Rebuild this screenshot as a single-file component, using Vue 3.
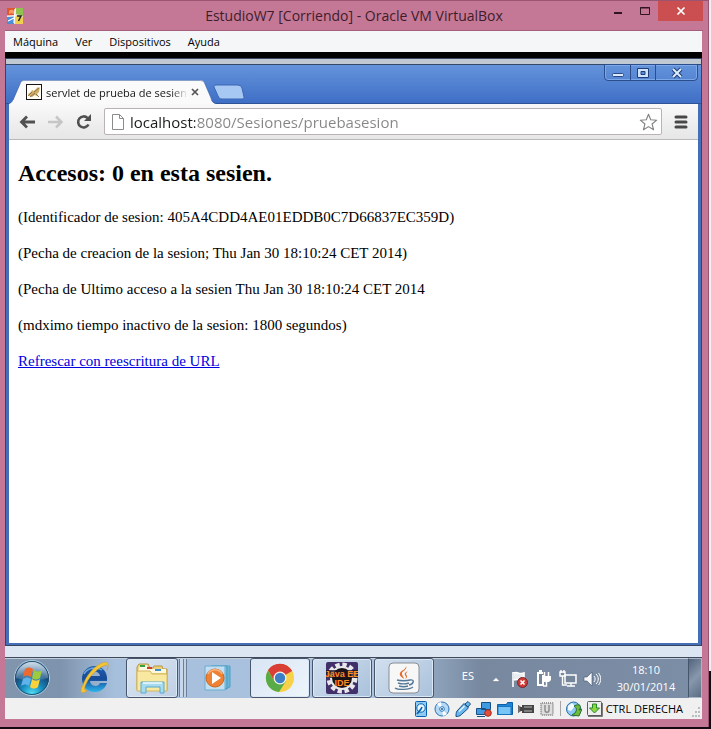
<script setup>
import { ref } from 'vue'

const menus = ['Máquina', 'Ver', 'Dispositivos', 'Ayuda']
const url = ref('localhost:8080/Sesiones/pruebasesion')
const details = [
  '(Identificador de sesion: 405A4CDD4AE01EDDB0C7D66837EC359D)',
  '(Pecha de creacion de la sesion; Thu Jan 30 18:10:24 CET 2014)',
  '(Pecha de Ultimo acceso a la sesien Thu Jan 30 18:10:24 CET 2014',
  '(mdximo tiempo inactivo de la sesion: 1800 segundos)'
]
</script>

<template>
  <div class="desktop">
    <div class="vm">
      <header class="titlebar">
        <svg class="vm-icon" width="16" height="16" viewBox="0 0 16 16" aria-hidden="true">
          <rect width="16" height="16" fill="#e9e2d2" />
          <path d="M0 0h8v7L0 8z" fill="#e0572f" />
          <path d="M9 0h7v8L9 6z" fill="#8fc24f" />
          <path d="M0 9l7-1v8H0z" fill="#4a8fd6" />
          <path d="M8 8l8 1v7H8z" fill="#f2cf4e" />
          <path d="M2 3c2-2 4-1 5 0v3C5 5 4 5 2 6z" fill="#f59b62" />
          <path d="M1 13l6-3M8 1l-1 14M0 8h9" stroke="#fff" stroke-width="1.2" />
          <path d="M10 8h4l-2.500 5" fill="none" stroke="#222" stroke-width="1.500" />
        </svg>
        <h1 class="title">EstudioW7 [Corriendo] - Oracle VM VirtualBox</h1>
        <div class="host-controls">
          <button class="hc" aria-label="Minimizar"><svg width="10" height="10"><path d="M1 7h8" stroke="#30151f" stroke-width="2" /></svg></button>
          <button class="hc" aria-label="Maximizar"><svg width="12" height="10"><path d="M1.500 1.500h9v7h-9zM1 2h10" fill="none" stroke="#30151f" /></svg></button>
          <button class="hc close" aria-label="Cerrar"><svg width="10" height="10"><path d="M1.500 1.500l7 7M8.500 1.500l-7 7" stroke="#fff" stroke-width="1.700" /></svg></button>
        </div>
      </header>

      <div class="vm-body">
        <nav class="menubar">
          <button v-for="m in menus" :key="m">{{ m }}</button>
        </nav>

        <div class="guest">
          <section class="browser">
            <div class="tabstrip">
              <div class="tab">
                <svg class="tab-shape" width="210" height="24" viewBox="0 0 210 24" aria-hidden="true">
                  <path d="M0 24c3-1 4-3 5-6l6-14c1-3 2-4 5-4h174c4 0 5 1 6 4l6 14c1 4 2 6 8 6z" fill="#fafafa" />
                  <path d="M4 20l7-16c1-3 2-3.500 5-3.500h174c4 0 5 1 6 3.500l6 14c1 4 2 5.500 8 5.500" fill="none" stroke="#2f55a0" stroke-opacity=".55" />
                </svg>
                <svg class="favicon" width="16" height="16" viewBox="0 0 16 16" aria-hidden="true">
                  <rect x=".5" y=".5" width="15" height="15" fill="#fffdf5" stroke="#151515" />
                  <path d="M2 10l3-2 1-2 2 1 2-2 2-2 1 1 1-1-1 5-2 2 2 3-4-2-3 2-3-1z" fill="#cfae68" />
                  <path d="M2 12l4-4M8 8l5-4M4 13l5-4M10 10l3 3" stroke="#7a6238" stroke-width=".8" />
                </svg>
                <span class="tab-label">servlet de prueba de sesien</span>
                <button class="tab-close" aria-label="Cerrar pestaña"><svg width="8" height="8"><path d="M1 1l6 6M7 1L1 7" stroke="#555" stroke-width="1.700" /></svg></button>
              </div>
              <button class="newtab" aria-label="Nueva pestaña">
                <svg width="32" height="16" viewBox="0 0 32 16"><path d="M3 1h21c3 0 4 1 5 3l2 9c0 1 0 2-2 2H9c-2 0-3-1-4-3L1 3c0-1 0-2 2-2z" fill="#a8c8f4" stroke="#3a66b5" /></svg>
              </button>
              <div class="win-controls">
                <button aria-label="Minimizar ventana"><svg width="14" height="12"><rect x="1.500" y="6.500" width="11" height="3" rx="1" fill="#dcebff" stroke="#284a86" /></svg></button>
                <button aria-label="Restaurar ventana"><svg width="14" height="12"><path fill-rule="evenodd" d="M1.500 1.500h11v9h-11zM5 4.500h4v3H5z" fill="#cfe2ff" stroke="#1f3f78" /></svg></button>
                <button class="wide" aria-label="Cerrar ventana"><svg width="14" height="12"><path d="M3 2l8 8M11 2l-8 8" stroke="#203f78" stroke-width="4" /><path d="M3 2l8 8M11 2l-8 8" stroke="#dcebff" stroke-width="2" /></svg></button>
              </div>
            </div>

            <div class="toolbar">
              <button class="tool" aria-label="Atrás"><svg width="18" height="16"><path d="M8 2.500L2.500 8 8 13.500M3 8h13" fill="none" stroke="#505050" stroke-width="2.800" /></svg></button>
              <button class="tool" aria-label="Adelante"><svg width="18" height="16"><path d="M9 2.500L14.500 8 9 13.500M14 8H1" fill="none" stroke="#c6c6c6" stroke-width="2.500" /></svg></button>
              <button class="tool" aria-label="Recargar"><svg width="18" height="16"><path d="M13.500 10.500A5.500 5.500 0 1 1 12.500 4" fill="none" stroke="#505050" stroke-width="2.600" /><path d="M16 0v7H9z" fill="#505050" /></svg></button>
              <div class="omnibox">
                <svg width="12" height="16"><path d="M.5.500h7l4 4v11H.5zM7.500.500v4h4" fill="#fff" stroke="#8b8b8b" /></svg>
                <input v-model="url" aria-label="Dirección" spellcheck="false" />
                <button class="star" aria-label="Añadir a marcadores"><svg width="19" height="18" viewBox="0 0 19 18"><path d="M9.500 1.200l2.200 5.600 6 .4-4.600 3.800 1.500 5.800-5.100-3.200-5.100 3.200L5.900 11 1.300 7.200l6-.4z" fill="#fff" stroke="#808080" stroke-width="1.100" stroke-linejoin="round" /></svg></button>
              </div>
              <button class="menu-btn" aria-label="Menú"><svg width="14" height="14"><path d="M2 2h10M2 7h10M2 12h10" stroke="#484848" stroke-width="3" stroke-linecap="round" /></svg></button>
            </div>

            <main class="page">
              <h2>Accesos: 0 en esta sesien.</h2>
              <p v-for="d in details" :key="d">{{ d }}</p>
              <p><a href="#">Refrescar con reescritura de URL</a></p>
            </main>
          </section>

          <footer class="taskbar">
            <button class="start" aria-label="Inicio">
              <svg width="38" height="38" viewBox="0 0 38 38">
                <defs>
                  <radialGradient id="orb" cx=".5" cy=".95" r=".8"><stop offset="0" stop-color="#4fe0f5" /><stop offset=".4" stop-color="#1689bd" /><stop offset=".75" stop-color="#164b7c" /><stop offset="1" stop-color="#5f83a6" /></radialGradient>
                  <linearGradient id="shine" x2="0" y2="1"><stop stop-color="#e2edf5" stop-opacity=".85" /><stop offset="1" stop-color="#8fb0cc" stop-opacity=".25" /></linearGradient>
                </defs>
                <circle cx="19" cy="19" r="17.500" fill="url(#orb)" stroke="#b2d0e2" />
                <circle cx="19" cy="19" r="16.500" fill="none" stroke="#224e70" />
                <path d="M3 19a16 16 0 0 1 32 0c-10 3-22 3-32 0z" fill="url(#shine)" />
                <path d="M12 10c3-2 5-2 8 0l-2 8c-3-2-5-2-8 0z" fill="#ee6a2c" />
                <path d="M21 11c3 2 5 2 8 0l-2 8c-3 2-5 2-8 0z" fill="#9ccc3d" />
                <path d="M10 20c3-2 5-2 8 0l-2 7c-3-2-5-2-8 0z" fill="#60b3ea" />
                <path d="M19 20c3 2 5 2 8 0l-2 8c-3 2-5 2-8 0z" fill="#fbd13c" />
              </svg>
            </button>
            <button class="ie" aria-label="Internet Explorer">
              <svg width="34" height="34" viewBox="0 0 34 34">
                <defs><linearGradient id="ieg" x2="0" y2="1"><stop stop-color="#1d5fae" /><stop offset=".5" stop-color="#164b98" /><stop offset="1" stop-color="#2ab5ec" /></linearGradient></defs>
                <path fill-rule="evenodd" d="M31 20H14c0 5 8 7 10 2h7c-2 6-7 9-12 9C11 31 6 25 6 18S11 5 19 5s13 7 12 15zM14 15h10c-1-6-9-6-10 0z" fill="url(#ieg)" />
                <path d="M8 13c3-6 12-8 18-4" fill="none" stroke="#6ca6df" stroke-width="1.500" />
                <path d="M7 24c-5 9 0 9 5 5-3 1-5 0-2-6C14 14 23 6 30 4c2 0 2 2 1 5 3-7 0-9-5-7C17 6 10 15 7 24z" fill="#f5c535" stroke="#c79a2a" stroke-width=".5" />
              </svg>
            </button>
            <button class="task explorer" aria-label="Explorador">
              <svg width="34" height="32" viewBox="0 0 34 32">
                <path d="M2 5l2-3h9l2 4h3l1-2h8l1 3h4v21H2z" fill="#ecd27a" stroke="#b99643" />
                <path d="M5 3h7l1 4h18v4H3z" fill="#fff8df" />
                <path d="M5 3h5v2H5z" fill="#36a042" /><path d="M12 5h5v2h-5z" fill="#ca3e32" /><path d="M20 7h6v2h-6z" fill="#3c8ed0" />
                <path d="M2 9h13l2 3h15v17H2z" fill="#f8e8a0" stroke="#d4b65e" />
                <path d="M6 31V20h23v11h-4v-6H11v6z" fill="#a6daf0" stroke="#5aa9cd" /><path d="M8 21h19" stroke="#effaff" stroke-width="1.500" />
              </svg>
            </button>
            <span class="stack" aria-hidden="true"></span>
            <button class="wmp" aria-label="Reproductor">
              <svg width="28" height="28" viewBox="0 0 28 28">
                <path d="M9 2h17v21l-5 2zM7 2h16v23H7z" fill="#86cae6" stroke="#4c9fc5" /><path d="M1 2h20v24H1z" fill="#c2def0" stroke="#69aed2" /><path d="M23 3v22M25 3v20" stroke="#4c9fc5" />
                <circle cx="11" cy="14" r="9" fill="#ee8133" stroke="#cb651f" /><path d="M4 10a8 8 0 0 1 14 0" stroke="#fab482" stroke-width="1.500" fill="none" /><path d="M8 8l9 6-9 6z" fill="#fff" />
              </svg>
            </button>
            <button class="task active" aria-label="Chrome">
              <svg width="30" height="30" viewBox="0 0 30 30">
                <circle cx="15" cy="15" r="14" fill="#f7d147" /><path d="M15 15L2.900 8a14 14 0 0 1 24.200 0z" fill="#d93f35" /><path d="M15 8h12a14 14 0 0 0-24-1l6 11z" fill="#d93f35" /><path d="M3 7.500a14 14 0 0 0 11 21.500l7-11-6 3-6-3z" fill="#58ab46" />
                <circle cx="15" cy="15" r="6.500" fill="#f4f4ef" /><circle cx="15" cy="15" r="5.200" fill="#3d7fc6" />
              </svg>
            </button>
            <button class="task" aria-label="Java EE IDE">
              <svg width="32" height="32" viewBox="0 0 32 32">
                <rect width="32" height="32" rx="2" fill="#42306b" />
                <circle cx="16" cy="16" r="13" fill="none" stroke="#e8e8ea" stroke-width="5" stroke-dasharray="4.200 2.600" /><circle cx="16" cy="16" r="11" fill="#181214" stroke="#e8e8ea" stroke-width="2" />
                <path d="M0 8h32v8H0z" fill="#1d1220" fill-opacity=".75" />
                <text class="ide-label" x="16" y="15" text-anchor="middle">Java EE</text><text class="ide-label" x="16" y="24" text-anchor="middle">IDE</text>
              </svg>
            </button>
            <button class="task" aria-label="Java">
              <svg width="32" height="32" viewBox="0 0 32 32">
                <rect x="1" y="1" width="30" height="30" rx="4" fill="#f7f7f7" stroke="#8a8d93" />
                <path d="M18 4c2 4-5 5-4 8 0 2 2 3 2 5-2-2-5-3-4-6s6-3 6-7zM20 9c-2 1-4 2-3 4s2 2 0 4c4-2 1-4 1-5s1-2 2-3z" fill="#e56c2b" />
                <path d="M9 18c3 1 10 1 13 0M10 21c3 1 8 1 11 0M11 24c3 1 6 1 9 0M22 18c5-1 4 4-1 5M7 26c3 2 14 2 18-1" fill="none" stroke="#537896" stroke-width="1.400" />
              </svg>
            </button>
            <div class="tray">
              <span class="lang">ES</span>
              <button aria-label="Mostrar iconos ocultos"><svg width="16" height="18"><path d="M4 11.500l4-4 4 4z" fill="#fff" stroke="#59687d" stroke-width=".5" /></svg></button>
              <button aria-label="Centro de actividades"><svg width="18" height="18"><path d="M2 2v15M3 3c3-2 5 2 10 0v7C9 12 7 8 3 10" fill="#e8edf3" stroke="#fff" stroke-width="1.600" /><circle cx="11.500" cy="12.500" r="5" fill="#cf3b36" stroke="#7b2329" /><path d="M9.500 10.500l4 4M13.500 10.500l-4 4" stroke="#fff" stroke-width="1.600" /></svg></button>
              <button aria-label="Energía"><svg width="18" height="18"><path d="M8 3H3v12h5V5" fill="#75869b" stroke="#fff" stroke-width="2" /><path d="M4 1h3" stroke="#fff" stroke-width="2" /><path d="M7 6h9v4l-2 2h-5l-2-2z" fill="#fff" /><path d="M11.500 12v4H8" fill="none" stroke="#fff" stroke-width="1.500" /><path d="M9.500 2v5M13.500 2v5" stroke="#fff" stroke-width="1.500" /></svg></button>
              <button aria-label="Red"><svg width="18" height="18"><path d="M6 5h11v8H6z" fill="#75869b" stroke="#fff" stroke-width="1.500" /><path d="M8 16h8M12 13v3M1 2h5v4H1zM3.500 6v9H8M2 0v3M5 0v3" fill="none" stroke="#fff" stroke-width="1.400" /></svg></button>
              <button aria-label="Volumen"><svg width="18" height="18"><path d="M1 7h3l5-5v14l-5-5H1z" fill="#f5f7fa" stroke="#46566b" stroke-width=".6" /><path d="M11 6c1.500 2 1.500 4 0 6M13 4c3 3 3 7 0 10M15.500 3c3 4 3 8 0 12" fill="none" stroke="#fff" /></svg></button>
              <time class="clock" datetime="2014-01-30T18:10"><span>18:10</span><span>30/01/2014</span></time>
            </div>
            <button class="show-desktop" aria-label="Mostrar escritorio"></button>
          </footer>
        </div>

        <div class="statusbar">
          <svg width="16" height="16" aria-label="Disco duro"><rect x="2.500" y=".5" width="11" height="15" rx="1" fill="#8fcaf2" stroke="#0861ae" /><circle cx="8" cy="7" r="4.200" fill="#e6f5ff" stroke="#0861ae" /><path d="M4 13l4-5 1-2" fill="none" stroke="#0861ae" stroke-width="1.600" /></svg>
          <svg width="16" height="16" aria-label="CD"><circle cx="8" cy="8" r="7" fill="#b4d9f7" stroke="#2b6fb2" /><path d="M8 8L3 3a7 7 0 0 1 4-2zM8 8l5 5a7 7 0 0 1-4 2z" fill="#fff" /><circle cx="8" cy="8" r="2.300" fill="#fff" stroke="#2874ba" /><circle cx="8" cy="8" r="1" fill="#175892" /></svg>
          <svg width="16" height="16" aria-label="USB"><path d="M10 3l3-2.500 2.500 2.500-2.500 3zM2 10l7-7.500 4.500 4.500-7 6.500c-2 2-4 2-5.500 2 0-2 0-4 1-5.500z" fill="#6ab6ee" stroke="#1b4f82" /><path d="M4 10.500l5.500-5.500" stroke="#e6f6ff" stroke-width="1.500" /></svg>
          <svg width="16" height="16" aria-label="Red"><path d="M5.500 1.500h9v7h-9zM.5 7.500h9v6h-9z" fill="#3f9ae2" stroke="#174f87" /><path d="M1 15.500h8" stroke="#174f87" /><circle cx="12" cy="12" r="3.300" fill="#e44f3c" stroke="#a42b20" /></svg>
          <svg width="16" height="16" aria-label="Carpetas"><path d="M.5 3.500h9l1-2h5v12H.5z" fill="#1e86d8" stroke="#0d5ea5" /><path d="M1 5.500h13v8H1z" fill="#76c5f6" stroke="#1673bd" /></svg>
          <svg width="16" height="16" aria-label="Captura"><path d="M0 4l3 2h1V4h12v8H4v-2H3l-3 2z" fill="#454545" /><path d="M6 6h8M6 10h8" stroke="#bbb" /><path d="M1 5v6" stroke="#999" /></svg>
          <svg width="16" height="16" aria-label="Virtualización"><rect x="2" y="2" width="12" height="12" rx="1" fill="#ccc" stroke="#999" stroke-dasharray="1 1" stroke-width="2" /><rect x="3" y="3" width="10" height="10" fill="#ddd" /><path d="M6 4v5c0 3 4 3 4 0V4" fill="none" stroke="#888" stroke-width="1.400" /></svg>
          <i class="sep"></i>
          <svg width="16" height="16" aria-label="Ratón"><circle cx="7.500" cy="8" r="7" fill="#8ccaf3" stroke="#286fae" /><path d="M2 5l4-3 3 3-4 5-3-1z" fill="#f3fbff" /><path d="M8 5c6-3 8 0 5 4l3-1-3 7-7-1 3-2c2-3 2-5-1-7z" fill="#70ba3f" stroke="#286f2d" /></svg>
          <svg width="16" height="16" aria-label="Teclado"><rect x=".5" y=".5" width="14" height="14" rx="1" fill="#eee" stroke="#5c5c5c" /><path d="M1 15h14V2" fill="none" stroke="#555" stroke-width="1.500" /><path d="M5.500 3h4v4h3l-5 5-5-5h3z" fill="#8ed63d" stroke="#25882d" /></svg>
          <span class="hostkey">CTRL DERECHA</span>
          <svg class="grip" width="10" height="10" aria-hidden="true"><path d="M7 0h2v2H7zM7 4h2v2H7zM7 8h2v2H7zM4 4h2v2H4zM4 8h2v2H4zM1 8h2v2H1z" fill="#b9bdbb" /></svg>
        </div>
      </div>
    </div>
  </div>
</template>

<style>
body { margin: 0; }
</style>

<style scoped>
* { box-sizing: border-box; }
button { border: 0; padding: 0; margin: 0; background: none; font: inherit; color: inherit; display: flex; align-items: center; justify-content: center; }
svg { display: block; flex: none; }

.desktop {
  min-height: 100vh;
  display: flex;
  padding: 0 2px 2px 0;
  background: linear-gradient(#f1edf0 0 92%, #150a10 92%);
  font-family: "Noto Sans", "Open Sans", sans-serif;
  font-size: 12px;
}
.vm {
  flex: 1;
  min-width: 0;
  display: flex;
  flex-direction: column;
  background: #c57896;
  border-top: 1px solid #9a5570;
  border-right: 1px solid #995471;
  padding: 0 6px 8px 5px;
}
.titlebar {
  height: 30px;
  display: grid;
  grid-template-columns: 1fr auto 1fr;
  align-items: center;
  margin-right: -1px;
  border-bottom: 1px solid #a55e79;
}
.vm-icon { margin-left: 2px; }
.title { margin: 0; font-family: "Open Sans", sans-serif; font-size: 14px; font-weight: 400; color: #3f1c2b; white-space: nowrap; }
.host-controls { display: flex; justify-self: end; align-self: start; }
.hc { width: 27px; height: 20px; }
.close { width: 45px; background: #cb4f50; }
.vm-body { flex: 1; display: flex; flex-direction: column; }

.menubar { height: 21px; display: flex; gap: 17px; padding: 0 8px; background: #f4f6f8; color: #000; font-family: "Open Sans", sans-serif; font-size: 11px; }

.guest { flex: 1; display: flex; flex-direction: column; background: #dbe6f2; border-top: 6px solid #000; }
.browser {
  flex: 1;
  display: flex;
  flex-direction: column;
  margin-bottom: 11px;
  border: solid #446eb8;
  border-width: 0 4px 3px;
  background: #fff;
  outline: 1px solid #35455f;
  outline-offset: -1px;
}
.tabstrip {
  display: flex;
  align-items: flex-end;
  height: 46px;
  margin: 0 -3px;
  padding-left: 3px;
  border-top: 6px solid #c0c9d1;
  background: linear-gradient(#6594dc, #3e6ec5);
  box-shadow: inset 0 1px #344966, inset 0 -1px #305396;
}
.tab { position: relative; width: 204px; height: 24px; display: flex; align-items: center; padding-left: 17px; }
.tab-shape { position: absolute; left: 0; top: 0; }
.favicon, .tab-label, .tab-close { position: relative; }
.tab-label {
  flex: 1;
  margin-left: 4px;
  white-space: nowrap;
  font-family: "Open Sans", sans-serif;
  font-size: 11px;
  color: #151515;
  mask-image: linear-gradient(to right, #000 88%, transparent);
}
.tab-close { width: 12px; height: 16px; margin: 0 12px 0 1px; }
.newtab { margin-bottom: 4px; }
.win-controls {
  display: flex;
  align-self: flex-start;
  margin: 0 3px 0 auto;
  height: 17px;
  border: 1px solid #2c4e8c;
  border-radius: 0 0 4px 4px;
  box-shadow: inset 0 0 0 1px #7da8e8;
}
.win-controls button { width: 25px; }
.win-controls button + button { border-left: 1px solid #2c4e8c; }
.win-controls .wide { width: 42px; }

.toolbar {
  height: 36px;
  display: flex;
  align-items: center;
  padding: 0 10px;
  background: linear-gradient(#f9f9f9, #e6e6e6);
  border-bottom: 1px solid #b9b9b9;
}
.tool { width: 28px; height: 28px; justify-content: flex-start; }
.omnibox {
  flex: 1;
  min-width: 0;
  height: 27px;
  margin: 0 12px 0 1px;
  display: flex;
  align-items: center;
  gap: 6px;
  padding: 0 3px 0 7px;
  background: #fff;
  border: 1px solid #bcb2b4;
  border-radius: 2px;
}
.omnibox input {
  flex: 1;
  min-width: 0;
  border: 0;
  padding: 0;
  outline: 0;
  font-family: "Open Sans", sans-serif;
  font-size: 15px;
  color: transparent;
  background: linear-gradient(to right, #1c1c1c 65px, #858585 65px);
  background-clip: text;
  -webkit-background-clip: text;
}
.menu-btn { height: 28px; }

.page { flex: 1; padding: 20px 9px 16px; color: #000; font-family: "Liberation Serif", "Times New Roman", serif; font-size: 15px; line-height: 20px; }
.page h2 { margin: 0 0 20px; font-size: 24px; line-height: 27px; }
.page p { margin: 0 0 16px; }
.page a { color: #0000e0; }

.taskbar {
  height: 41px;
  display: flex;
  align-items: center;
  border-top: 1px solid #3f4b5d;
  background: linear-gradient(to right, #8195ad 0, #7e93ad 55px, #a6bfdc 110px, #abc3df 400px, #8da2ba 431px, #77889f 475px, #7c8ea6 100%);
  box-shadow: inset 0 1px #c3cedb;
}
.start { margin-left: 8px; }
.ie { margin-left: 25px; }
.task {
  width: 60px;
  height: 40px;
  margin-right: 2px;
  flex: none;
  border: 1px solid #47566b;
  border-radius: 3px;
  background: linear-gradient(135deg, #d2e0ef, #a9c1db);
  box-shadow: inset 0 0 0 1px #dce8f5;
}
.active { background: linear-gradient(135deg, #d8e5f4, #eef5fc); }
.explorer { width: 52px; margin: 0 0 0 16px; background: linear-gradient(135deg, #dbe6f2, #bfcfe4); }
.stack { width: 8px; height: 38px; margin-left: 1px; border: solid #6b7f99; border-width: 0 1px; background: linear-gradient(to right, #c8d7e9 3px, #6b7f99 3px 4px, #c0d1e6 4px); }
.wmp { margin: 0 18px 0 17px; }
.ide-label { font-family: "Liberation Sans", sans-serif; font-size: 9px; font-weight: 700; fill: #ff8a24; }
.tray { margin-left: auto; display: flex; align-items: center; color: #fff; height: 40px; }
.tray button { width: 24px; height: 36px; padding-top: 2px; }
.lang { margin: 0 10px 5px 0; font-size: 11px; }
.clock { display: flex; flex-direction: column; align-items: center; width: 84px; font-family: "Open Sans", sans-serif; font-size: 11px; line-height: 17px; }
.show-desktop { width: 14px; height: 40px; flex: none; background: linear-gradient(135deg, #52647c, #8798ac 50%, #5b6d84); border: 1px solid #a8b5c4; border-left-color: #45566d; }

.statusbar { height: 21px; display: flex; align-items: center; justify-content: flex-end; gap: 5px; background: #f0f0f0; color: #000; }
.sep { width: 1px; height: 15px; background: #a5a5a5; }
.hostkey { font-family: "Open Sans", sans-serif; font-size: 11px; white-space: nowrap; margin-left: -2px; }
.grip { align-self: flex-end; margin: 0 1px 2px 3px; }
</style>
